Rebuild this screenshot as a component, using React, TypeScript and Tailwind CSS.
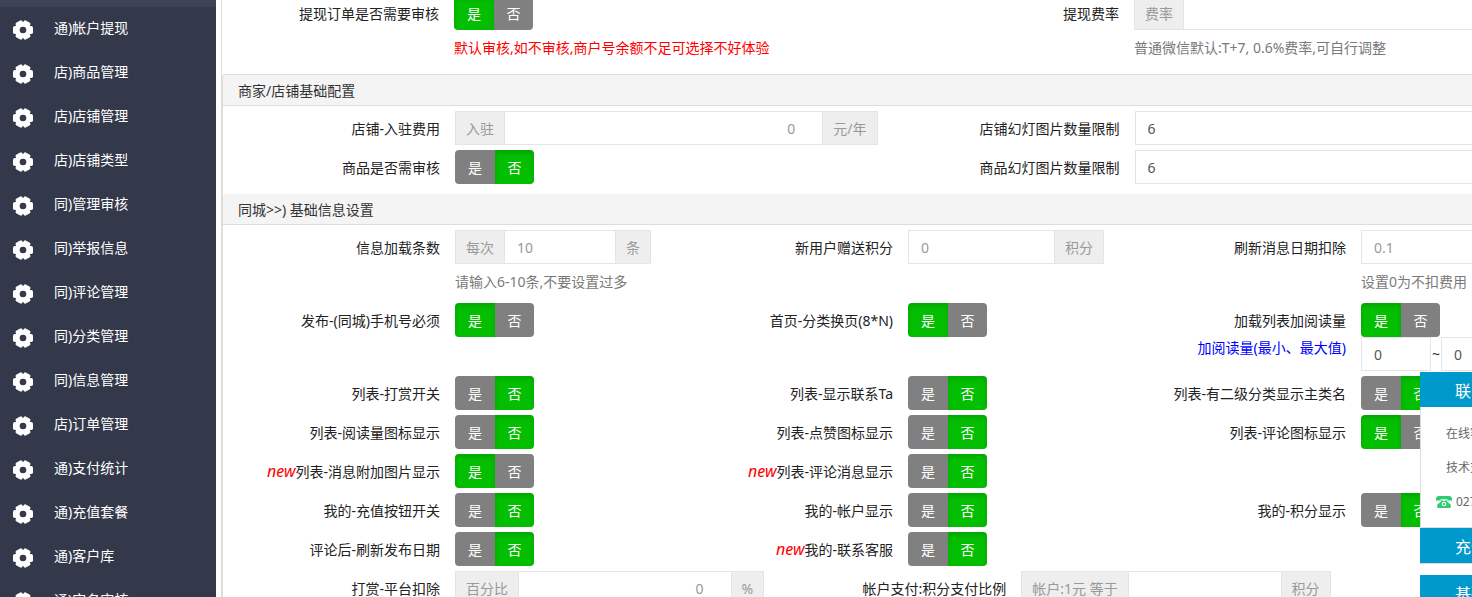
import React, { useId, useState } from 'react';
import clsx from 'clsx';

const menuItems = [
  '通)帐户提现',
  '店)商品管理',
  '店)店铺管理',
  '店)店铺类型',
  '同)管理审核',
  '同)举报信息',
  '同)评论管理',
  '同)分类管理',
  '同)信息管理',
  '店)订单管理',
  '通)支付统计',
  '通)充值套餐',
  '通)客户库',
  '通)实名审核',
];

const GearIcon = () => (
  <svg viewBox="0 0 20 20" className="mt-[3px] h-5 w-5 shrink-0" fill="#fff" aria-hidden="true">
    <circle cx="10" cy="10" r="8.2" />
    <rect x="0" y="6" width="20" height="8" rx="1.8" />
    <rect x="0.3" y="6.3" width="19.4" height="7.4" rx="1.8" transform="rotate(60 10 10)" />
    <rect x="0.3" y="6.3" width="19.4" height="7.4" rx="1.8" transform="rotate(120 10 10)" />
    <circle cx="10" cy="10" r="3.3" fill="#33384a" />
  </svg>
);

const PhoneIcon = () => (
  <svg viewBox="0 0 16 12" className="h-3 w-4 shrink-0" aria-hidden="true">
    <path
      fill="#2ecc71"
      d="M3 0h10c2 0 3 1.3 3 3v1.6h-4.6V3.2H4.6v1.4H0V3c0-1.7 1-3 3-3zM5.4 4h1.2v.9h2.8V4h1.2v1l3.6 3.2c.4.4.6.8.6 1.4V11c0 .6-.4 1-1 1H2.2c-.6 0-1-.4-1-1V9.6c0-.6.2-1 .6-1.4L5.4 5z"
    />
    <circle cx="8" cy="8" r="2.3" fill="#fff" />
    <circle cx="8" cy="8" r="1.2" fill="#2ecc71" />
  </svg>
);

const Sidebar = () => (
  <nav className="w-[216px] shrink-0 bg-[#33384a]">
    <div className="h-[7px] bg-[#3d4255]" />
    <ul>
      {menuItems.map((item) => (
        <li key={item}>
          <a href="#" className="flex h-11 items-center gap-[21px] pb-0.5 pl-[13px] text-white">
            <GearIcon />
            {item}
          </a>
        </li>
      ))}
    </ul>
  </nav>
);

type FieldProps = {
  label: string;
  isNew?: boolean;
  subLabel?: string;
  hint?: string;
  hintRed?: boolean;
  className?: string;
  children: (id: string) => React.ReactNode;
};

const Field = ({ label, isNew, subLabel, hint, hintRed, className, children }: FieldProps) => {
  const id = useId();
  return (
    <div className={clsx('flex min-w-0', className)}>
      <div className="w-[232px] shrink-0 pr-[15px] text-right text-[#222]">
        <label id={`${id}-label`} htmlFor={id} className="block h-[34px] leading-9">
          {isNew && <i className="text-base leading-none text-[#f00]">new</i>}
          {label}
        </label>
        {subLabel && <span className="block leading-[22px] text-[#00f]">{subLabel}</span>}
      </div>
      <div className="min-w-0 flex-1 pr-[25px]">
        {children(id)}
        {hint && (
          <p className={clsx('h-[34px] leading-9 whitespace-nowrap', hintRed ? 'text-[#f00]' : 'text-[#7a7a7a]')}>
            {hint}
          </p>
        )}
      </div>
    </div>
  );
};

const Toggle = ({ id, on = false }: { id: string; on?: boolean }) => {
  const [value, setValue] = useState(on);
  const active = 'bg-[#04be02] shadow-[inset_0_3px_5px_rgba(0,0,0,0.125)]';
  return (
    <div role="group" aria-labelledby={`${id}-label`} className="flex h-[34px] text-white">
      <button
        id={id}
        type="button"
        aria-pressed={value}
        onClick={() => setValue(true)}
        className={clsx('w-10 rounded-l pt-0.5', value ? active : 'bg-[#808080]')}
      >
        是
      </button>
      <button
        type="button"
        aria-pressed={!value}
        onClick={() => setValue(false)}
        className={clsx('w-[39px] rounded-r pt-0.5', value ? 'bg-[#808080]' : active)}
      >
        否
      </button>
    </div>
  );
};

type TextInputProps = {
  id: string;
  value?: string;
  before?: string;
  after?: string;
  muted?: boolean;
  alignRight?: boolean;
};

const TextInput = ({ id, value = '', before, after, muted, alignRight }: TextInputProps) => (
  <div className="flex h-[34px]">
    {before && (
      <span className="flex shrink-0 items-center border border-r-0 border-[#e5e5e8] bg-[#eee] px-2.5 pt-0.5 text-[#999]">
        {before}
      </span>
    )}
    <input
      id={id}
      type="text"
      defaultValue={value}
      className={clsx(
        'min-w-0 flex-1 border border-[#e5e5e8] bg-white pt-0.5 pl-3 outline-none',
        muted ? 'text-[#999]' : 'text-[#555]',
        alignRight ? 'pr-[27px] text-right' : 'pr-3',
      )}
    />
    {after && (
      <span className="flex shrink-0 items-center border border-l-0 border-[#e5e5e8] bg-[#eee] px-2.5 pt-0.5 text-[#999]">
        {after}
      </span>
    )}
  </div>
);

const RangeInput = ({ id }: { id: string }) => (
  <div className="flex h-[34px] items-center">
    <input
      id={`${id}-min`}
      aria-label="最小"
      type="text"
      defaultValue="0"
      className="h-full w-[70px] border border-[#e5e5e8] px-3 text-[#555] outline-none"
    />
    <span className="w-2.5 text-center text-[#333]">~</span>
    <input
      id={`${id}-max`}
      aria-label="最大值"
      type="text"
      defaultValue="0"
      className="h-full w-[70px] border border-[#e5e5e8] px-3 text-[#555] outline-none"
    />
  </div>
);

const SectionTitle = ({ children }: { children: React.ReactNode }) => (
  <h2 className="h-[31px] rounded-t-[3px] border-b border-[#ddd] bg-[#f4f4f4] pl-[15px] leading-8 text-[#333]">
    {children}
  </h2>
);

const Rows = ({ children }: { children: React.ReactNode }) => (
  <div className="flex flex-col gap-[5px] pt-[5px] pb-2.5">{children}</div>
);

const switchRows = [
  [
    { label: '列表-打赏开关' },
    { label: '列表-显示联系Ta' },
    { label: '列表-有二级分类显示主类名' },
  ],
  [
    { label: '列表-阅读量图标显示' },
    { label: '列表-点赞图标显示' },
    { label: '列表-评论图标显示', on: true },
  ],
  [
    { label: '列表-消息附加图片显示', isNew: true, on: true },
    { label: '列表-评论消息显示', isNew: true },
  ],
  [{ label: '我的-充值按钮开关' }, { label: '我的-帐户显示' }, { label: '我的-积分显示' }],
  [{ label: '评论后-刷新发布日期' }, { label: '我的-联系客服', isNew: true }],
] as { label: string; isNew?: boolean; on?: boolean }[][];

const SettingsForm = () => (
  <form className="-mt-1 w-full min-w-[1360px]">
    <div className="grid grid-cols-2 pb-2.5">
      <Field label="提现订单是否需要审核" hint="默认审核,如不审核,商户号余额不足可选择不好体验" hintRed>
        {(id) => <Toggle id={id} on />}
      </Field>
      <Field label="提现费率" hint="普通微信默认:T+7, 0.6%费率,可自行调整">
        {(id) => <TextInput id={id} before="费率" />}
      </Field>
    </div>

    <div className="rounded-tl border-t border-l border-[#ddd]">
      <SectionTitle>商家/店铺基础配置</SectionTitle>
      <Rows>
        <div className="grid grid-cols-2">
          <Field label="店铺-入驻费用">
            {(id) => <TextInput id={id} value="0" before="入驻" after="元/年" muted alignRight />}
          </Field>
          <Field label="店铺幻灯图片数量限制">{(id) => <TextInput id={id} value="6" />}</Field>
        </div>
        <div className="grid grid-cols-2">
          <Field label="商品是否需审核">{(id) => <Toggle id={id} />}</Field>
          <Field label="商品幻灯图片数量限制">{(id) => <TextInput id={id} value="6" />}</Field>
        </div>
      </Rows>

      <SectionTitle>同城&gt;&gt;) 基础信息设置</SectionTitle>
      <Rows>
        <div className="grid grid-cols-3">
          <Field label="信息加载条数" hint="请输入6-10条,不要设置过多">
            {(id) => <TextInput id={id} value="10" before="每次" after="条" muted />}
          </Field>
          <Field label="新用户赠送积分">
            {(id) => <TextInput id={id} value="0" after="积分" muted />}
          </Field>
          <Field label="刷新消息日期扣除" hint="设置0为不扣费用">
            {(id) => <TextInput id={id} value="0.1" muted />}
          </Field>
        </div>
        <div className="grid grid-cols-3">
          <Field label="发布-(同城)手机号必须">{(id) => <Toggle id={id} on />}</Field>
          <Field label="首页-分类换页(8*N)">{(id) => <Toggle id={id} on />}</Field>
          <Field label="加载列表加阅读量" subLabel="加阅读量(最小、最大值)">
            {(id) => (
              <>
                <Toggle id={id} on />
                <RangeInput id={id} />
              </>
            )}
          </Field>
        </div>
        {switchRows.map((row) => (
          <div key={row[0].label} className="grid grid-cols-3">
            {row.map(({ label, isNew, on }) => (
              <Field key={label} label={label} isNew={isNew}>
                {(id) => <Toggle id={id} on={on} />}
              </Field>
            ))}
          </div>
        ))}
        <div className="grid grid-cols-12">
          <Field label="打赏-平台扣除" className="col-span-5">
            {(id) => <TextInput id={id} value="0" before="百分比" after="%" muted alignRight />}
          </Field>
          <Field label="帐户支付:积分支付比例" className="col-span-5">
            {(id) => <TextInput id={id} before="帐户:1元 等于" after="积分" />}
          </Field>
        </div>
      </Rows>
    </div>
  </form>
);

const PanelTitle = ({ children }: { children: React.ReactNode }) => (
  <h3 className="h-[35px] bg-[#09c] pl-[35px] text-base leading-[38px] text-white">{children}</h3>
);

const ContactPanel = () => (
  <aside className="absolute right-0 bottom-0 h-[225px] w-[52px] overflow-hidden text-xs whitespace-nowrap text-[#666]">
    <PanelTitle>联系</PanelTitle>
    <div className="border-b border-l border-[#ddd] bg-white pt-2.5 pb-2 leading-[34px]">
      <p className="pl-[25px]">在线客服</p>
      <p className="pl-[25px]">技术支持</p>
      <p className="flex items-center gap-1 pl-[15px]">
        <PhoneIcon />
        027
      </p>
    </div>
    <PanelTitle>充值</PanelTitle>
    <div className="mb-[11px] h-px bg-[#ddd]" />
    <PanelTitle>基础</PanelTitle>
  </aside>
);

const App = () => (
  <div className="relative flex h-screen overflow-hidden bg-white font-['Noto_Sans','Noto_Sans_CJK_SC',sans-serif] text-sm">
    <Sidebar />
    <main className="ml-[5px] min-w-0 flex-1 overflow-hidden border-l border-[#ddd]">
      <SettingsForm />
    </main>
    <ContactPanel />
  </div>
);

export default App;
